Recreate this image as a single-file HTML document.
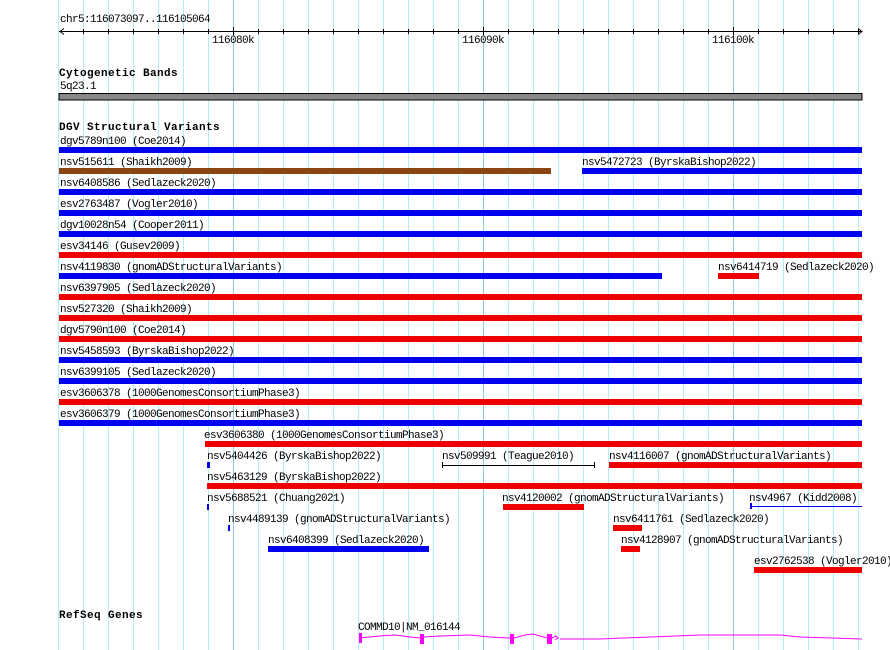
<!DOCTYPE html>
<html><head><meta charset="utf-8"><style>
html,body{margin:0;padding:0;background:#fff;}
body{width:890px;height:650px;position:relative;overflow:hidden;font-family:"Liberation Mono",monospace;font-size:11px;color:#000;}
#grid{position:absolute;left:58px;top:0;width:805px;height:650px;background:repeating-linear-gradient(to right,#b3ecf2 0 1px,transparent 1px 25px);}
.maj{position:absolute;top:0;width:1px;height:650px;background:#8ccbe0;}
.t{position:absolute;white-space:pre;line-height:12px;margin-top:2px;letter-spacing:-0.6px;}
.b{position:absolute;height:6px;}
.bl{background:#0000ee;}
.rd{background:#ee0000;}
.br{background:#8b4513;}
.h{position:absolute;font-weight:bold;font-size:11px;line-height:12px;white-space:pre;letter-spacing:0.4px;}
</style></head><body>
<div id="grid"></div>
<div class="maj" style="left:233px"></div>
<div class="maj" style="left:483px"></div>
<div class="maj" style="left:733px"></div>
<svg style="position:absolute;left:0;top:0" width="890" height="650">
<line x1="59" y1="31.5" x2="862" y2="31.5" stroke="#000"/>
<path d="M64 28.5 L60 31.5 L64 34.5 M858 28.5 L862 31.5 L858 34.5" stroke="#000" fill="none"/>
<g stroke="#000">
<line x1="83.5" y1="29" x2="83.5" y2="34"/><line x1="108.5" y1="29" x2="108.5" y2="34"/><line x1="133.5" y1="29" x2="133.5" y2="34"/><line x1="158.5" y1="29" x2="158.5" y2="34"/><line x1="183.5" y1="29" x2="183.5" y2="34"/><line x1="208.5" y1="29" x2="208.5" y2="34"/><line x1="233.5" y1="27" x2="233.5" y2="35"/><line x1="258.5" y1="29" x2="258.5" y2="34"/><line x1="283.5" y1="29" x2="283.5" y2="34"/><line x1="308.5" y1="29" x2="308.5" y2="34"/><line x1="333.5" y1="29" x2="333.5" y2="34"/><line x1="358.5" y1="29" x2="358.5" y2="34"/><line x1="383.5" y1="29" x2="383.5" y2="34"/><line x1="408.5" y1="29" x2="408.5" y2="34"/><line x1="433.5" y1="29" x2="433.5" y2="34"/><line x1="458.5" y1="29" x2="458.5" y2="34"/><line x1="483.5" y1="27" x2="483.5" y2="35"/><line x1="508.5" y1="29" x2="508.5" y2="34"/><line x1="533.5" y1="29" x2="533.5" y2="34"/><line x1="558.5" y1="29" x2="558.5" y2="34"/><line x1="583.5" y1="29" x2="583.5" y2="34"/><line x1="608.5" y1="29" x2="608.5" y2="34"/><line x1="633.5" y1="29" x2="633.5" y2="34"/><line x1="658.5" y1="29" x2="658.5" y2="34"/><line x1="683.5" y1="29" x2="683.5" y2="34"/><line x1="708.5" y1="29" x2="708.5" y2="34"/><line x1="733.5" y1="27" x2="733.5" y2="35"/><line x1="758.5" y1="29" x2="758.5" y2="34"/><line x1="783.5" y1="29" x2="783.5" y2="34"/><line x1="808.5" y1="29" x2="808.5" y2="34"/><line x1="833.5" y1="29" x2="833.5" y2="34"/><line x1="858.5" y1="29" x2="858.5" y2="34"/>
</g>
<rect x="59" y="93.5" width="803" height="6.5" fill="#888" stroke="#000" stroke-width="1"/>
<path d="M442.5 462 V468 M442 465.5 H594 M594.5 462 V468" stroke="#000" fill="none"/>
<path d="M750 506.5 H862" stroke="#0000ee"/>
<rect x="750" y="503" width="2" height="6" fill="#0000ee"/>
<g stroke="#ff00ff" fill="none">
<path d="M359 638 L380 636 L395 635 L410 637 L420 638 L424 637 L440 636 L470 635 L490 637 L510 638 L514 638 L525 635 L533 634 L547 638 L552 638 L556 636 L558 638 L555 640 M560 639 L600 639 L650 637 L700 635 L780 635 L800 637 L862 639"/>
</g>
<g fill="#ff00ff">
<rect x="359" y="633" width="3" height="10"/>
<rect x="420" y="634" width="4" height="10"/>
<rect x="510" y="634" width="4" height="10"/>
<rect x="547" y="634" width="5" height="10"/>
</g>
</svg>
<div class="t" style="left:60px;top:12px">chr5:116073097..116105064</div>
<div class="t" style="left:212px;top:33px">116080k</div>
<div class="t" style="left:462px;top:33px">116090k</div>
<div class="t" style="left:712px;top:33px">116100k</div>
<div class="h" style="left:59px;top:68px">Cytogenetic Bands</div>
<div class="t" style="left:60px;top:79px">5q23.1</div>
<div class="h" style="left:59px;top:122px">DGV Structural Variants</div>

<div class="t" style="left:60px;top:134px">dgv5789n100 (Coe2014)</div><div class="b bl" style="left:59px;width:803px;top:147px"></div>
<div class="t" style="left:60px;top:155px">nsv515611 (Shaikh2009)</div><div class="b br" style="left:59px;width:492px;top:168px"></div>
<div class="t" style="left:582px;top:155px">nsv5472723 (ByrskaBishop2022)</div><div class="b bl" style="left:582px;width:280px;top:168px"></div>
<div class="t" style="left:60px;top:176px">nsv6408586 (Sedlazeck2020)</div><div class="b bl" style="left:59px;width:803px;top:189px"></div>
<div class="t" style="left:60px;top:197px">esv2763487 (Vogler2010)</div><div class="b bl" style="left:59px;width:803px;top:210px"></div>
<div class="t" style="left:60px;top:218px">dgv10028n54 (Cooper2011)</div><div class="b bl" style="left:59px;width:803px;top:231px"></div>
<div class="t" style="left:60px;top:239px">esv34146 (Gusev2009)</div><div class="b rd" style="left:59px;width:803px;top:252px"></div>
<div class="t" style="left:60px;top:260px">nsv4119830 (gnomADStructuralVariants)</div><div class="b bl" style="left:59px;width:603px;top:273px"></div>
<div class="t" style="left:718px;top:260px">nsv6414719 (Sedlazeck2020)</div><div class="b rd" style="left:718px;width:41px;top:273px"></div>
<div class="t" style="left:60px;top:281px">nsv6397905 (Sedlazeck2020)</div><div class="b rd" style="left:59px;width:803px;top:294px"></div>
<div class="t" style="left:60px;top:302px">nsv527320 (Shaikh2009)</div><div class="b rd" style="left:59px;width:803px;top:315px"></div>
<div class="t" style="left:60px;top:323px">dgv5790n100 (Coe2014)</div><div class="b rd" style="left:59px;width:803px;top:336px"></div>
<div class="t" style="left:60px;top:344px">nsv5458593 (ByrskaBishop2022)</div><div class="b bl" style="left:59px;width:803px;top:357px"></div>
<div class="t" style="left:60px;top:365px">nsv6399105 (Sedlazeck2020)</div><div class="b bl" style="left:59px;width:803px;top:378px"></div>
<div class="t" style="left:60px;top:386px">esv3606378 (1000GenomesConsortiumPhase3)</div><div class="b rd" style="left:59px;width:803px;top:399px"></div>
<div class="t" style="left:60px;top:407px">esv3606379 (1000GenomesConsortiumPhase3)</div><div class="b bl" style="left:59px;width:803px;top:420px"></div>
<div class="t" style="left:204px;top:428px">esv3606380 (1000GenomesConsortiumPhase3)</div><div class="b rd" style="left:205px;width:657px;top:441px"></div>
<div class="t" style="left:207px;top:449px">nsv5404426 (ByrskaBishop2022)</div><div class="b bl" style="left:207px;width:3px;top:462px"></div>
<div class="t" style="left:442px;top:449px">nsv509991 (Teague2010)</div>
<div class="t" style="left:609px;top:449px">nsv4116007 (gnomADStructuralVariants)</div><div class="b rd" style="left:609px;width:253px;top:462px"></div>
<div class="t" style="left:207px;top:470px">nsv5463129 (ByrskaBishop2022)</div><div class="b rd" style="left:207px;width:655px;top:483px"></div>
<div class="t" style="left:207px;top:491px">nsv5688521 (Chuang2021)</div><div class="b bl" style="left:207px;width:2px;top:504px"></div>
<div class="t" style="left:502px;top:491px">nsv4120002 (gnomADStructuralVariants)</div><div class="b rd" style="left:503px;width:81px;top:504px"></div>
<div class="t" style="left:749px;top:491px">nsv4967 (Kidd2008)</div>
<div class="t" style="left:228px;top:512px">nsv4489139 (gnomADStructuralVariants)</div><div class="b bl" style="left:228px;width:2px;top:525px"></div>
<div class="t" style="left:613px;top:512px">nsv6411761 (Sedlazeck2020)</div><div class="b rd" style="left:613px;width:29px;top:525px"></div>
<div class="t" style="left:268px;top:533px">nsv6408399 (Sedlazeck2020)</div><div class="b bl" style="left:268px;width:161px;top:546px"></div>
<div class="t" style="left:621px;top:533px">nsv4128907 (gnomADStructuralVariants)</div><div class="b rd" style="left:621px;width:19px;top:546px"></div>
<div class="t" style="left:754px;top:554px">esv2762538 (Vogler2010)</div><div class="b rd" style="left:754px;width:108px;top:567px"></div>

<div class="h" style="left:59px;top:610px">RefSeq Genes</div>
<div class="t" style="left:358px;top:620px">COMMD10|NM_016144</div>
</body></html>
